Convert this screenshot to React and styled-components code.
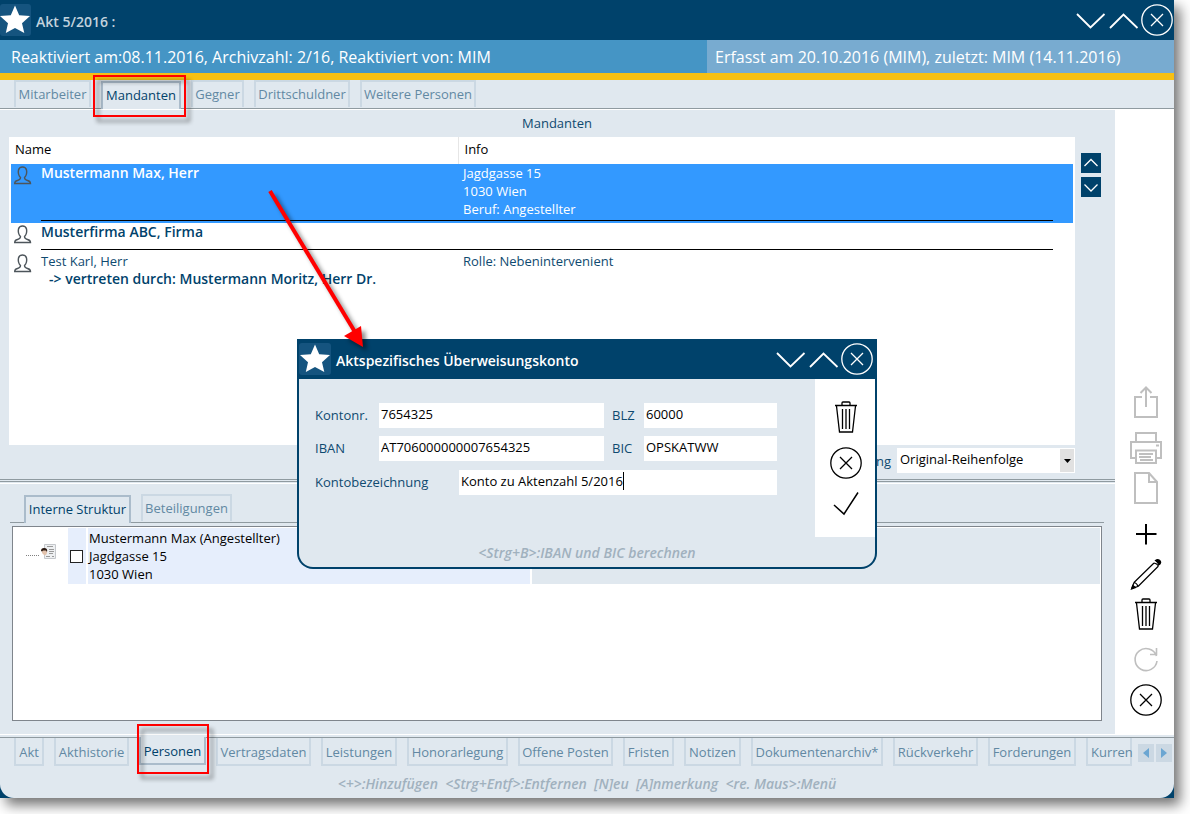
import React from 'react';
import styled, { createGlobalStyle, css } from 'styled-components';

const c = {
  navy: '#00426b',
  navyLight: '#15547f',
  text: '#0f4a70',
  pane: '#e0e8ef',
  line: '#8f9aa0',
  tabBorder: '#cbd8e3',
  tabBorderActive: '#abbccb',
  tabText: '#6288a3',
  hint: '#a0b1be',
  selected: '#3399ff',
  cell: '#e6eefc',
};

const Global = createGlobalStyle`
  *, *::before, *::after { box-sizing: border-box; }
  body { margin: 0; background: #fff; font-family: 'Open Sans', sans-serif; font-size: 13px; line-height: 18px; color: ${c.text}; }
  button, input, select { font: inherit; color: inherit; }
  button { padding: 0; border: 0; background: none; cursor: pointer; }
  svg { display: block; }
`;

const Window = styled.main`
  position: relative;
  display: flex;
  flex-direction: column;
  min-height: calc(100vh - 16px);
  margin: 0 16px 16px 0;
  background: ${c.navy};
  box-shadow: 6px 7px 12px rgba(0, 0, 0, 0.55);
`;

const TitleBar = styled.header`
  display: flex;
  align-items: center;
  height: 40px;
  padding: 0 ${(p) => (p.$dialog ? 4 : 1)}px 0 ${(p) => (p.$dialog ? 2 : 0)}px;
  background: ${c.navy};
`;

const StarBox = styled.span`
  width: ${(p) => (p.$flush ? 31 : 32)}px;
  height: 32px;
  border-radius: 3px;
  background: ${c.navyLight};
`;

const Title = styled.h1`
  flex: 1;
  margin: 4px 0 0 5px;
  font-size: 14px;
  line-height: 18px;
  font-weight: 600;
  color: ${(p) => (p.$dim ? '#c3d3de' : '#fff')};
`;

const Controls = styled.div`
  display: flex;
  gap: 1px;
`;

const IconButton = styled.button`
  width: 32px;
  height: 32px;
  color: ${(p) => p.$color || '#000'};
`;

const Strip = styled.div`
  display: flex;
  height: 33px;
  font-size: 16px;
  line-height: 34px;
  color: #fff;
  background: #4595c5;
`;

const StripMain = styled.div`
  flex: 1;
  padding-left: 11px;
  white-space: nowrap;
`;

const StripSide = styled.div`
  flex: 0 0 467px;
  padding-left: 8px;
  white-space: nowrap;
  background: #78abd0;
`;

const Body = styled.div`
  flex: 1;
  display: flex;
  flex-direction: column;
  border-top: 7px solid #f7c012;
  border-radius: 0 0 14px 14px;
  background: ${c.pane};
`;

const Tabs = styled.nav`
  display: flex;
  gap: 10px;
  height: ${(p) => p.$height}px;
  padding-left: 14px;
  ${(p) => !p.$bottom && css`border-bottom: 1px solid ${c.line};`}
  ${(p) => p.$bottom && css`flex: 1; min-width: 0;`}
`;

const Tab = styled.button`
  position: relative;
  display: flex;
  justify-content: center;
  align-items: center;
  flex: 0 0 ${(p) => p.$width}px;
  height: 27px;
  padding: 0 0 2px;
  border: 2px solid ${c.tabBorder};
  border-bottom: 0;
  color: ${c.tabText};
  white-space: nowrap;
  ${(p) => p.$active && css`
    z-index: 1;
    height: 28px;
    margin-top: 1px;
    border-color: ${c.tabBorderActive};
    background: ${c.pane};
    color: ${c.navy};
  `}
  ${(p) => p.$bottom && css`
    height: 28px;
    padding: 2px 0 0;
    border-bottom: 2px solid ${p.$active ? c.tabBorderActive : c.tabBorder};
    border-top: 0;
  `}
  ${(p) => p.$bottom && p.$active && css`
    margin-top: -1px;
  `}
  ${(p) => p.$last && css`
    flex: 1 1 0;
    justify-content: flex-start;
    min-width: 0;
    padding-left: 3px;
  `}
`;

const Mark = styled.span`
  position: absolute;
  z-index: 2;
  inset: ${(p) => p.$inset};
  border: 2px solid #f00;
  filter: drop-shadow(4px 5px 2px rgba(0, 0, 0, 0.45));
  pointer-events: none;
`;

const Work = styled.div`
  flex: 1;
  display: flex;
  border-top: 1px solid #fff;
  border-bottom: 1px solid #fff;
`;

const Panes = styled.div`
  flex: 1;
  min-width: 0;
  display: flex;
  flex-direction: column;
`;

const ToolColumn = styled.aside`
  flex: 0 0 59px;
  display: flex;
  flex-direction: column;
  align-items: center;
  justify-content: flex-end;
  gap: 14px;
  padding: 0 0 18px 3px;
  background: #fff;
`;

const ToolGroup = styled.div`
  display: flex;
  flex-direction: column;
  gap: 8px;
`;

const Upper = styled.section`
  display: grid;
  grid-template-columns: minmax(0, 1fr) 20px;
  column-gap: 6px;
  padding: 4px 14px 6px 9px;
`;

const Caption = styled.h2`
  grid-column: 1 / 3;
  margin: 0;
  padding: 0 0 5px 4px;
  font-size: 13px;
  line-height: 18px;
  font-weight: 400;
  text-align: center;
`;

const ListBox = styled.div`
  min-height: 308px;
  padding: 0 2px;
  background: #fff;
`;

const List = styled.table`
  width: 100%;
  border-collapse: collapse;
  table-layout: fixed;
`;

const Head = styled.th`
  height: 27px;
  padding: 0 0 4px ${(p) => (p.$info ? 6 : 4)}px;
  font-weight: 400;
  text-align: left;
  color: #000;
  ${(p) => p.$divided && css`border-right: 1px solid #e6e6e6;`}
`;

const Row = styled.tr`
  background: ${(p) => (p.$selected ? c.selected : '#fff')};
  color: ${(p) => (p.$selected ? '#fff' : c.text)};
`;

const Cell = styled.td`
  height: 29px;
  padding: 0 0 5px ${(p) => p.$pad || 0}px;
  vertical-align: top;
  ${(p) => p.$ruled && css`
    background: linear-gradient(#000, #000) 0 calc(100% - 2px) / 100% 1px no-repeat;
  `}
`;

const PersonCell = styled.td`
  padding: 2px 0 0 3px;
  vertical-align: top;
`;

const Strong = styled.div`
  padding-left: ${(p) => (p.$indent ? 8 : 0)}px;
  font-size: 14px;
  font-weight: 600;
  color: ${(p) => (p.$light ? '#fff' : c.navy)};
`;

const Movers = styled.div`
  display: flex;
  flex-direction: column;
  gap: 4px;
  padding-top: 16px;
`;

const Mover = styled.button`
  width: 20px;
  height: 20px;
  background: ${c.navy};
`;

const SortRow = styled.div`
  display: flex;
  justify-content: flex-end;
  align-items: center;
  gap: 6px;
  padding-top: 3px;
`;

const SelectWrap = styled.span`
  position: relative;
  width: 178px;
  height: 25px;
`;

const Select = styled.select`
  appearance: none;
  width: 100%;
  height: 100%;
  padding: 0 18px 4px 3px;
  border: 0;
  border-radius: 0;
  background: #fff;
  color: #000;
`;

const Arrow = styled.span`
  position: absolute;
  top: 1px;
  right: 1px;
  display: grid;
  place-items: center;
  width: 14px;
  height: 23px;
  background: #e1e1e1;
  pointer-events: none;
`;

const Splitter = styled.div`
  height: 5px;
  border-top: 1px solid ${c.line};
  border-bottom: 1px solid #fff;
  &::before {
    content: '';
    display: block;
    margin-top: 1px;
    border-top: 1px solid ${c.line};
  }
`;

const Lower = styled.section`
  flex: 1;
  display: flex;
  flex-direction: column;
  padding: 10px 11px 13px 10px;
`;

const TreeBox = styled.div`
  flex: 1;
  min-height: 100px;
  margin: 3px 2px 0;
  padding: 1px;
  border: 1px solid #7f858c;
  background: #fff;
`;

const TreeRow = styled.div`
  display: flex;
  gap: 2px;
  height: 56px;
  color: #000;
`;

const TreeBranch = styled.div`
  display: flex;
  align-items: center;
  gap: 2px;
  width: 52px;
  padding: 0 0 8px 12px;
  &::before {
    content: '';
    width: 13px;
    height: 7px;
    border-bottom: 1px dotted #808080;
  }
`;

const TreeCell = styled.div`
  flex: ${(p) => p.$flex};
  display: flex;
  align-items: center;
  padding-left: ${(p) => p.$pad || 0}px;
  background: ${(p) => p.$bg || c.cell};
  white-space: pre-line;
`;

const Check = styled.input`
  appearance: none;
  width: 13px;
  height: 13px;
  margin: 0;
  border: 1px solid #222;
  background: #fff;
`;

const Footer = styled.footer`
  padding-bottom: 4px;
`;

const FooterTabs = styled.div`
  display: flex;
  margin-top: 2px;
  border-top: 1px solid ${c.line};
`;

const Pager = styled.div`
  display: flex;
  gap: 2px;
  padding: 6px 2px 0 6px;
`;

const PagerButton = styled.button`
  display: grid;
  place-items: center;
  width: 16px;
  height: 18px;
  background: ${c.tabBorder};
  color: #6ba6d2;
`;

const Hint = styled.p`
  margin: 0;
  font-size: 14px;
  line-height: 20px;
  font-style: italic;
  font-weight: 600;
  text-align: center;
  white-space: pre;
  color: ${c.hint};
`;

const Dialog = styled.section`
  position: absolute;
  z-index: 5;
  top: 339px;
  left: 297px;
  width: 580px;
  border-radius: 0 0 16px 16px;
  background: ${c.navy};
  padding-bottom: 2px;
`;

const DialogBody = styled.div`
  display: grid;
  grid-template-columns: 1fr 60px;
  margin: 0 2px;
  overflow: hidden;
  border-radius: 0 0 14px 14px;
  background: ${c.pane};
`;

const DialogTools = styled.div`
  display: flex;
  flex-direction: column;
  align-items: center;
  gap: 14px;
  height: 158px;
  padding: 22px 0 0 2px;
  background: #fff;
`;

const DialogHint = styled.div`
  grid-column: 1 / 3;
  padding: 6px 0 4px;
`;

const Form = styled.form`
  display: grid;
  grid-template-columns: 64px 1fr 40px 133px;
  grid-auto-rows: 25px;
  row-gap: 8px;
  padding: 24px 38px 0 16px;
`;

const Label = styled.label`
  padding: 3px 0 0 ${(p) => (p.$second ? 8 : 0)}px;
`;

const LongLine = styled.div`
  grid-column: 1 / 5;
  display: grid;
  grid-template-columns: 144px 1fr;
  height: 26px;
  padding-top: 1px;
`;

const Field = styled.input`
  width: 100%;
  min-width: 0;
  height: 25px;
  padding: 0 2px 4px;
  border: 0;
  border-radius: 0;
  outline: 0;
  background: #fff;
  color: #000;
`;

const FieldWithCaret = styled.div`
  display: flex;
  position: relative;
`;

const Caret = styled.span`
  position: absolute;
  top: 2px;
  left: 164px;
  width: 1px;
  height: 18px;
  background: #000;
`;

const Pointer = styled.svg`
  position: absolute;
  z-index: 6;
  top: 180px;
  left: 260px;
  pointer-events: none;
  filter: drop-shadow(4px 4px 2px rgba(0, 0, 0, 0.45));
`;

const Svg = ({ size = 32, w = 1.5, children }) => (
  <svg width={size} height={size} viewBox={`0 0 ${size} ${size}`} fill="none" stroke="currentColor" strokeWidth={w} aria-hidden="true">
    {children}
  </svg>
);

const Star = ({ flush }) => (
  <StarBox $flush={flush}>
    <svg width={flush ? 31 : 32} height="32" viewBox={flush ? '1 0 31 32' : '0 0 32 32'} aria-hidden="true">
      <path fill="#fff" d="M16 1.500 20.200 11.200 31 12 23 19.200 25.300 29 16 24 6.800 29 9 19.200 1 12 11.800 11.200Z" />
    </svg>
  </StarBox>
);
const Down = () => <Svg w={1.8}><path d="M2 10 15.500 23.500 29.500 10" /></Svg>;
const Up = () => <Svg w={1.8}><path d="M2 24 15.500 10.500 29.500 24" /></Svg>;
const Cross = () => <Svg w={1.3}><circle cx="16" cy="16" r="15.200" /><path d="m10 10 12 12M22 10 10 22" /></Svg>;
const Trash = () => (
  <Svg w={1.3}>
    <path d="M5 4.500h22M12 4.500V2q0-1 1-1h6q1 0 1 1v2.500M6.500 5l3 26h13l3-26" />
    <path d="M12.500 8v20M16 8v20M19.500 8v20" />
  </Svg>
);
const Tick = () => <Svg w={1.5}><path d="M4 18 14 27 28 5.500" /></Svg>;
const Share = () => <Svg w={2}><path d="M12 11H5v20h22V11h-7M16 21V2M10.500 7 16 1.500 21.500 7" /></Svg>;
const Printer = () => (
  <Svg w={2}>
    <path d="M6 10V1h20v9M6 26H1V10h30v16h-5M6 18.500h20V31H6Z" />
    <path d="M9 22h14M9 25h12M10 28h13M26 13.500h3" />
  </Svg>
);
const Doc = () => <Svg w={2}><path d="M5 1h14l8 9v21H5ZM19 1v9h8" /></Svg>;
const Plus = () => <Svg w={2}><path d="M16 6v20.500M6 16h20.500" /></Svg>;
const Pencil = () => (
  <Svg w={1.2}>
    <path d="M4 24.500 24 5M8 28.500 28.500 8M4 24.500 2 30l6-1.500M4 24.500q3 .5 4 4M24 5q3 .5 4.500 3" />
    <path fill="currentColor" d="M25.500 2.500q2-1.500 4-.2 2 1.700.5 3.700l-1.200.8Q28 4 25.500 2.500ZM2.800 27.500 1.500 31 5.500 29.500Z" />
  </Svg>
);
const Refresh = () => <Svg w={1.6}><path d="M26.500 12A11 11 0 1 0 27 17M20 10.500h6.500V4" /></Svg>;
const Person = () => (
  <svg width="18" height="19" viewBox="0 0 18 19" fill="none" stroke="#4d555b" strokeWidth="1.4" aria-hidden="true">
    <path d="M6.500 11.500C4.500 9.500 4 6.500 4.500 4 5 2 6.500 1 8.500 1s3.500 1 4 3c.5 2.500 0 5.500-2 7.500 0 2 1 2.500 3 3 2 .5 3 1 3 3H.7c0-2 .8-2.500 2.800-3 2-.5 3-1 3-3Z" />
  </svg>
);
const Card = () => (
  <svg width="15" height="16" viewBox="0 0 15 16" aria-hidden="true">
    <path fill="#eef0f2" stroke="#c5c8cc" d="M3.500.5h11v14h-11z" />
    <path stroke="#9a9a9a" d="M6 2.500h6M8 5.500h5M8 7.500h5M8 9.500h4M5 12.500h4M11 12.500h2" />
    <path fill="#e3c3ad" d="M1 6h5v3q-1 3-3 2L1 9Z" />
    <path fill="#2b1a12" d="M0 7q0-3 3-3 4 0 3 4L5 6.500H2L1 7.500Z" />
  </svg>
);

const WindowControls = () => (
  <Controls>
    <IconButton type="button" $color="#fff" aria-label="Verkleinern"><Down /></IconButton>
    <IconButton type="button" $color="#fff" aria-label="Vergrößern"><Up /></IconButton>
    <IconButton type="button" $color="#fff" aria-label="Schließen"><Cross /></IconButton>
  </Controls>
);

const Tool = ({ label, icon: Icon, muted }) => (
  <IconButton type="button" aria-label={label} $color={muted ? '#bfbfbf' : '#000'}><Icon /></IconButton>
);

const bottomTabs = [
  ['Akt', 30],
  ['Akthistorie', 75],
  ['Personen', 67],
  ['Vertragsdaten', 95],
  ['Leistungen', 76],
  ['Honorarlegung', 101],
  ['Offene Posten', 95],
  ['Fristen', 51],
  ['Notizen', 57],
  ['Dokumentenarchiv*', 132],
  ['Rückverkehr', 85],
  ['Forderungen', 88],
  ['Kurren', 46],
];

export default function App() {
  return (
    <>
      <Global />
      <Window>
        <TitleBar>
          <Star flush />
          <Title $dim>Akt 5/2016 :</Title>
          <WindowControls />
        </TitleBar>
        <Strip>
          <StripMain>Reaktiviert am:08.11.2016, Archivzahl: 2/16, Reaktiviert von: MIM</StripMain>
          <StripSide>Erfasst am 20.10.2016 (MIM), zuletzt: MIM (14.11.2016)</StripSide>
        </Strip>
        <Body>
          <Tabs $height={29}>
            <Tab type="button" $width={77}>Mitarbeiter</Tab>
            <Tab type="button" $width={80} $active>Mandanten<Mark $inset="-8px -7px -8px -10px" /></Tab>
            <Tab type="button" $width={53}>Gegner</Tab>
            <Tab type="button" $width={96}>Drittschuldner</Tab>
            <Tab type="button" $width={116}>Weitere Personen</Tab>
          </Tabs>
          <Work>
            <Panes>
              <Upper>
                <Caption>Mandanten</Caption>
                <ListBox>
                  <List>
                    <colgroup>
                      <col style={{ width: 30 }} />
                      <col style={{ width: 417 }} />
                      <col />
                      <col style={{ width: 20 }} />
                    </colgroup>
                    <thead>
                      <tr>
                        <Head colSpan={2} $divided>Name</Head>
                        <Head colSpan={2} $info>Info</Head>
                      </tr>
                    </thead>
                    <tbody>
                      <Row $selected>
                        <PersonCell><Person /></PersonCell>
                        <Cell $ruled><Strong $light>Mustermann Max, Herr</Strong></Cell>
                        <Cell $ruled $pad={5}>Jagdgasse 15<br />1030 Wien<br />Beruf: Angestellter</Cell>
                        <td />
                      </Row>
                      <Row>
                        <PersonCell><Person /></PersonCell>
                        <Cell $ruled><Strong>Musterfirma ABC, Firma</Strong></Cell>
                        <Cell $ruled />
                        <td />
                      </Row>
                      <Row>
                        <PersonCell><Person /></PersonCell>
                        <Cell>Test Karl, Herr<Strong $indent>-&gt; vertreten durch: Mustermann Moritz, Herr Dr.</Strong></Cell>
                        <Cell $pad={5}>Rolle: Nebenintervenient</Cell>
                        <td />
                      </Row>
                    </tbody>
                  </List>
                </ListBox>
                <Movers>
                  <Mover type="button" aria-label="Nach oben"><svg width="20" height="20" fill="none" stroke="#fff" strokeWidth="1.300"><path d="m3.500 13 6.500-6.500 6.500 6.500" /></svg></Mover>
                  <Mover type="button" aria-label="Nach unten"><svg width="20" height="20" fill="none" stroke="#fff" strokeWidth="1.300"><path d="m3.500 7.500 6.500 6.500 6.500-6.500" /></svg></Mover>
                </Movers>
                <SortRow>
                  <label htmlFor="sort">Sortierung</label>
                  <SelectWrap>
                    <Select id="sort"><option>Original-Reihenfolge</option></Select>
                    <Arrow><svg width="7" height="4"><path d="M0 0h7L3.500 4Z" /></svg></Arrow>
                  </SelectWrap>
                </SortRow>
              </Upper>
              <Splitter />
              <Lower>
                <Tabs $height={29}>
                  <Tab type="button" $width={107} $active>Interne Struktur</Tab>
                  <Tab type="button" $width={91}>Beteiligungen</Tab>
                </Tabs>
                <TreeBox>
                  <TreeRow>
                    <TreeBranch><Card /></TreeBranch>
                    <TreeCell $flex="0 0 18px" $pad={2}><Check type="checkbox" aria-label="Mustermann Max" /></TreeCell>
                    <TreeCell $flex="0 0 442px" $pad={1}>{'Mustermann Max (Angestellter)\nJagdgasse 15\n1030 Wien'}</TreeCell>
                    <TreeCell $flex="1" $bg={c.pane} />
                  </TreeRow>
                </TreeBox>
              </Lower>
            </Panes>
            <ToolColumn>
              <ToolGroup><Tool label="Exportieren" icon={Share} muted /></ToolGroup>
              <ToolGroup>
                <Tool label="Drucken" icon={Printer} muted />
                <Tool label="Dokument" icon={Doc} muted />
              </ToolGroup>
              <ToolGroup>
                <Tool label="Hinzufügen" icon={Plus} />
                <Tool label="Bearbeiten" icon={Pencil} />
                <Tool label="Entfernen" icon={Trash} />
              </ToolGroup>
              <ToolGroup>
                <Tool label="Aktualisieren" icon={Refresh} muted />
                <Tool label="Abbrechen" icon={Cross} />
              </ToolGroup>
            </ToolColumn>
          </Work>
          <Footer>
            <FooterTabs>
              <Tabs $height={36} $bottom>
                {bottomTabs.map(([name, width], i) => (
                  <Tab key={name} type="button" $width={width} $bottom $active={name === 'Personen'} $last={i === bottomTabs.length - 1}>
                    {name}
                    {name === 'Personen' && <Mark $inset="-13px -5px -11px -4px" />}
                  </Tab>
                ))}
              </Tabs>
              <Pager>
                <PagerButton type="button" aria-label="Zurück"><svg width="6" height="10" fill="currentColor"><path d="M6 0v10L0 5Z" /></svg></PagerButton>
                <PagerButton type="button" aria-label="Weiter"><svg width="6" height="10" fill="currentColor"><path d="M0 0v10l6-5Z" /></svg></PagerButton>
              </Pager>
            </FooterTabs>
            <Hint>{'<+>:Hinzufügen  <Strg+Entf>:Entfernen  [N]eu  [A]nmerkung  <re. Maus>:Menü'}</Hint>
          </Footer>
        </Body>

        <Dialog role="dialog" aria-label="Aktspezifisches Überweisungskonto">
          <TitleBar $dialog>
            <Star />
            <Title as="h2">Aktspezifisches Überweisungskonto</Title>
            <WindowControls />
          </TitleBar>
          <DialogBody>
            <Form>
              <Label htmlFor="konto">Kontonr.</Label>
              <Field id="konto" defaultValue="7654325" />
              <Label htmlFor="blz" $second>BLZ</Label>
              <Field id="blz" defaultValue="60000" />
              <Label htmlFor="iban">IBAN</Label>
              <Field id="iban" defaultValue="AT706000000007654325" />
              <Label htmlFor="bic" $second>BIC</Label>
              <Field id="bic" defaultValue="OPSKATWW" />
              <LongLine>
                <Label htmlFor="name">Kontobezeichnung</Label>
                <FieldWithCaret>
                  <Field id="name" defaultValue="Konto zu Aktenzahl 5/2016" />
                  <Caret />
                </FieldWithCaret>
              </LongLine>
            </Form>
            <DialogTools>
              <Tool label="Löschen" icon={Trash} />
              <ToolGroup>
                <Tool label="Abbrechen" icon={Cross} />
                <Tool label="Übernehmen" icon={Tick} />
              </ToolGroup>
            </DialogTools>
            <DialogHint><Hint>{'<Strg+B>:IBAN und BIC berechnen'}</Hint></DialogHint>
          </DialogBody>
        </Dialog>

        <Pointer width="120" height="180" viewBox="0 0 120 180" aria-hidden="true">
          <path d="M10 11 95 152" stroke="#f00" strokeWidth="4" />
          <path d="M84 156 101 146 103 167Z" fill="#f00" />
        </Pointer>
      </Window>
    </>
  );
}
